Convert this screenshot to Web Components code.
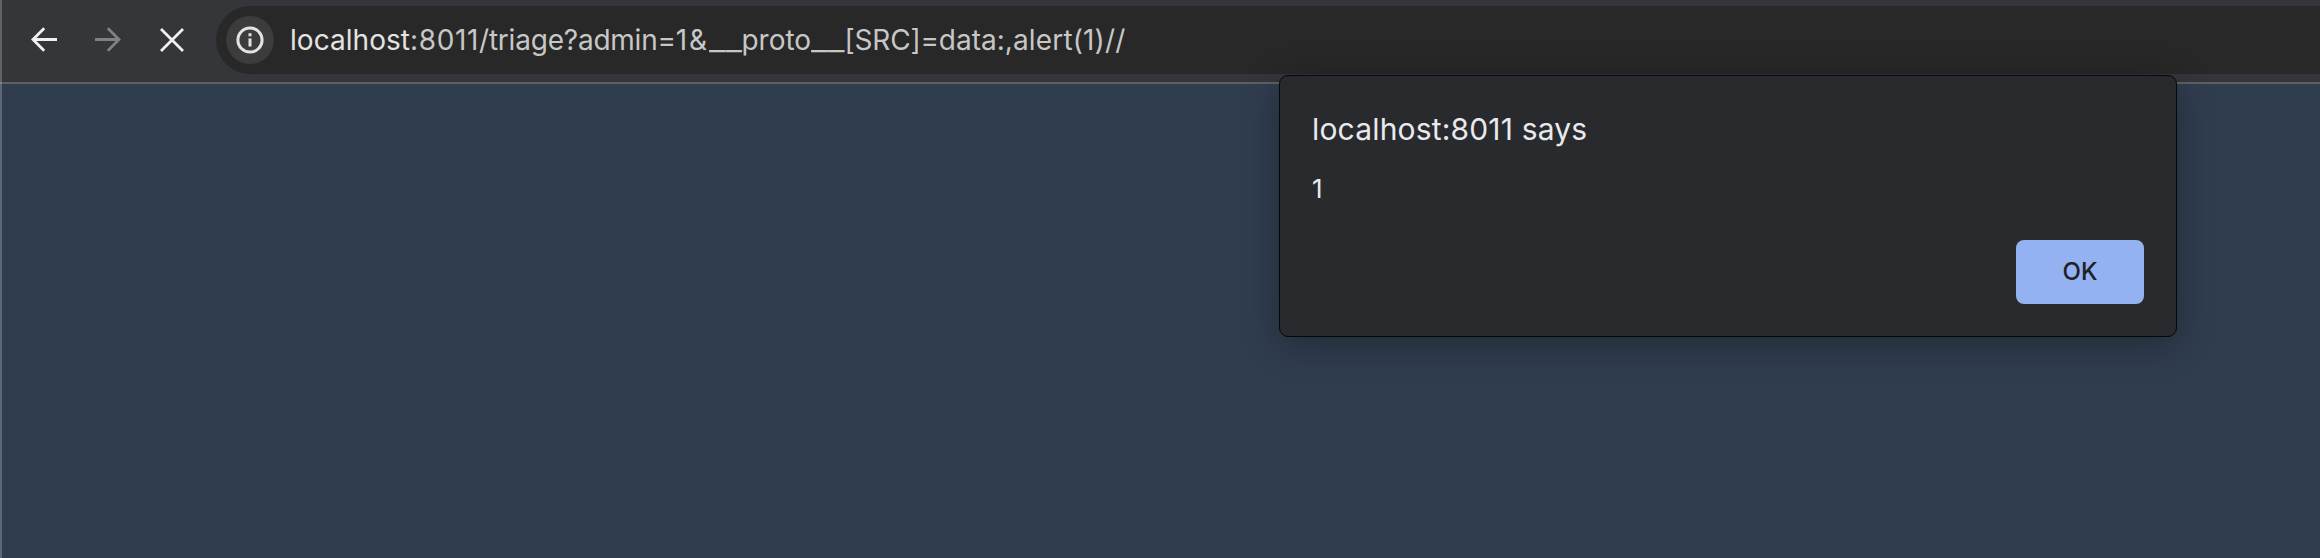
<!DOCTYPE html>
<html lang="en">
<head>
<meta charset="utf-8">
<title>localhost:8011</title>
<style>
html, body { margin: 0; height: 100%; overflow: hidden; background: #303d4f; font-family: Inter, "Liberation Sans", sans-serif; }
</style>
</head>
<body>
<browser-window>
  <nav-toolbar slot="toolbar">
    <nav-icon slot="nav" name="back"></nav-icon>
    <nav-icon slot="nav" name="forward"></nav-icon>
    <nav-icon slot="nav" name="stop"></nav-icon>
    <address-bar><url-part width="120" host>localhost</url-part><url-part width="69">:8011</url-part><url-part width="84.8">/triage</url-part><url-part width="112">?admin=</url-part><url-part width="32.9">1&amp;</url-part><url-part width="32.8" stretch>__</url-part><url-part width="69.500">proto</url-part><url-part width="33.500" stretch>__</url-part><url-part width="76">[SRC]</url-part><url-part width="18.3">=</url-part><url-part width="74.200">data:,</url-part><url-part width="112.500">alert(1)//</url-part></address-bar>
  </nav-toolbar>
  <alert-dialog slot="dialog">
    <span slot="title">localhost:8011 says</span>
    <span slot="message">1</span>
    <dialog-button slot="actions">OK</dialog-button>
  </alert-dialog>
</browser-window>
<script>
const define = (name, html, setup) => customElements.define(name, class extends HTMLElement {
  constructor() {
    super();
    this.attachShadow({ mode: 'open' }).innerHTML = html;
  }
  connectedCallback() { if (setup) setup(this); }
});

define('browser-window', `
<style>
:host { display: flex; flex-direction: column; position: relative; height: 558px; width: 100%; overflow: hidden; background: #303d4f; }
main { flex: 1; }
.edge { position: absolute; left: 0; top: 0; width: 2px; height: 100%; background: rgba(255,255,255,.22); }
</style>
<slot name="toolbar"></slot>
<main></main>
<div class="edge"></div>
<slot name="dialog"></slot>`);

define('nav-toolbar', `
<style>
:host { display: flex; align-items: flex-start; box-sizing: border-box; height: 84px; padding: 6px 0 0 12px; background: #35363a; border-bottom: 2px solid #5f6064; }
nav { display: flex; width: 204px; height: 68px; align-items: center; }
</style>
<nav><slot name="nav"></slot></nav>
<slot></slot>`);

const paths = {
  back: '<path stroke="#f1f1f2" d="M45 33.500H21.500M32.200 22.200 21 33.500l11.200 11.300"/>',
  forward: '<path stroke="#818184" d="M19 33.500H42.500M31.800 22.200 43 33.500 31.800 44.800"/>',
  stop: '<path stroke="#f1f1f2" d="M21 23 43 45M43 23 21 45"/>'
};
define('nav-icon', `
<style>
:host { display: block; width: 64px; height: 68px; flex: none; }
svg { display: block; }
</style>
<svg width="64" height="68" viewBox="0 0 64 68" fill="none" stroke-width="2.8"></svg>`, el => {
  el.shadowRoot.querySelector('svg').innerHTML = paths[el.getAttribute('name')];
});

define('address-bar', `
<style>
:host { display: flex; align-items: center; flex: 1; height: 68px; box-sizing: border-box; padding-left: 10px; background: #282828; border-radius: 34px 0 0 34px; color: #c7c7c7; font-size: 28px; line-height: 68px; white-space: nowrap; }
.info { width: 48px; height: 48px; border-radius: 50%; background: #3c3c3c; margin-right: 16px; flex: none; }
.info svg { display: block; }
.url { display: flex; }
</style>
<div class="info"><svg width="48" height="48" viewBox="0 0 48 48"><circle cx="24" cy="24" r="12.1" fill="none" stroke="#e3e3e3" stroke-width="3"/><path d="M24 22.500v8M24 17.300v3" stroke="#e3e3e3" stroke-width="3"/></svg></div>
<div class="url"><slot></slot></div>`);

// A run of the URL that fills a given advance width, by tracking or by stretching its glyphs.
define('url-part', `
<style>
:host { display: block; flex: none; }
:host([host]) { color: #e3e3e3; }
span { display: inline-block; transform-origin: 0 50%; }
</style>
<span><slot></slot></span>`, el => {
  const span = el.shadowRoot.querySelector('span');
  const width = parseFloat(el.getAttribute('width'));
  const natural = span.getBoundingClientRect().width;
  el.style.width = width + 'px';
  if (el.hasAttribute('stretch')) span.style.transform = `scaleX(${width / natural})`;
  else span.style.letterSpacing = (width - natural) / el.textContent.length + 'px';
});

define('alert-dialog', `
<style>
:host { display: flex; flex-direction: column; position: absolute; left: 1279px; top: 75px; width: 898px; height: 262px; box-sizing: border-box; padding: 32px; background: #292a2d; border: 1px solid #060708; border-radius: 9px; box-shadow: 0 8px 36px rgba(0,0,0,.3); color: #e8eaed; }
.title { font-size: 30px; line-height: 42px; letter-spacing: .17px; }
.message { font-size: 26px; line-height: 36px; margin-top: 21px; }
.actions { display: flex; justify-content: flex-end; margin-top: auto; }
</style>
<div class="title"><slot name="title"></slot></div>
<div class="message"><slot name="message"></slot></div>
<div class="actions"><slot name="actions"></slot></div>`);

define('dialog-button', `
<style>
:host { display: flex; align-items: center; justify-content: center; box-sizing: border-box; padding-bottom: 1px; width: 128px; height: 64px; border-radius: 8px; background: #94b2f2; color: #202124; font-size: 24px; font-weight: 500; }
</style>
<slot></slot>`);
</script>
</body>
</html>
